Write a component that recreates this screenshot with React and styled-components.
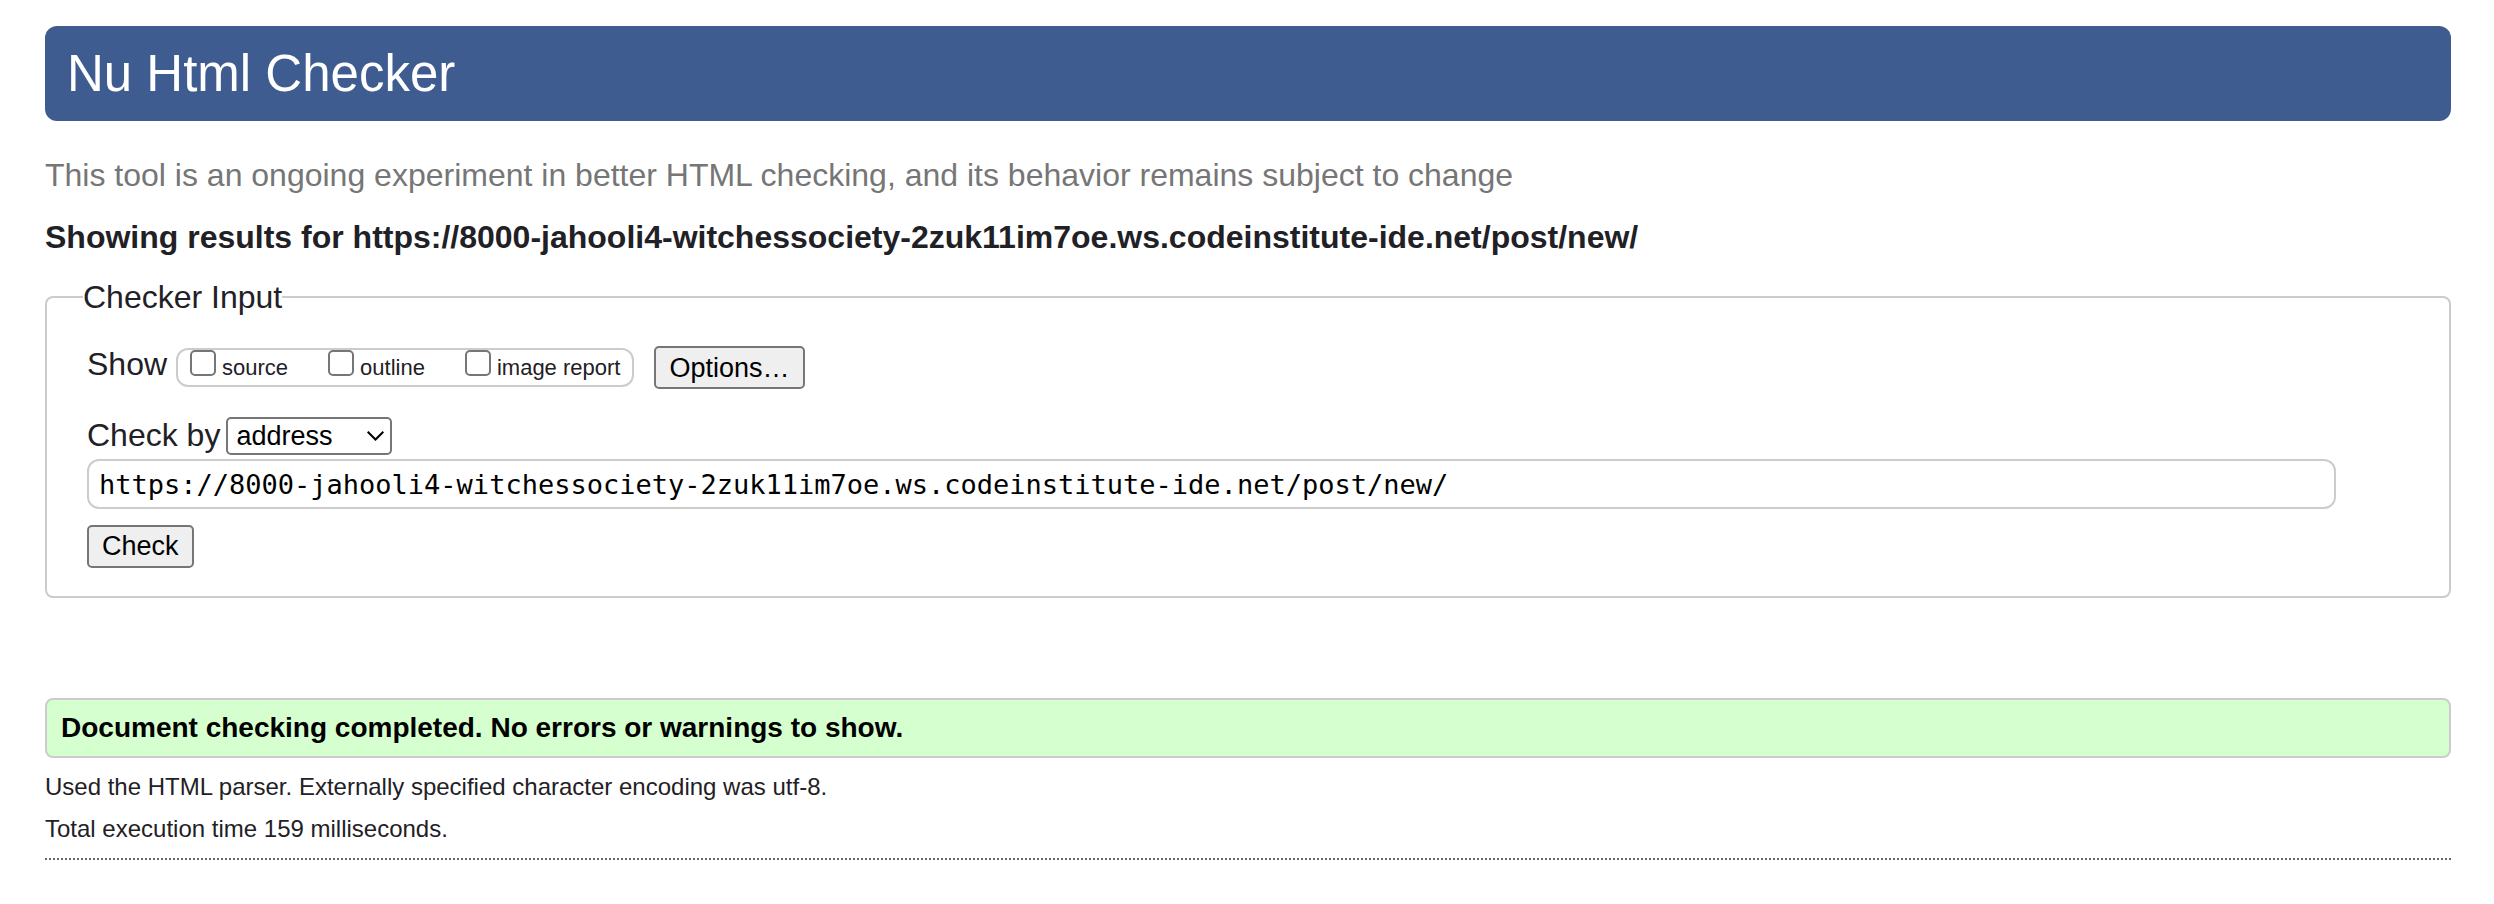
import React from 'react';
import styled, { createGlobalStyle } from 'styled-components';

const GlobalStyle = createGlobalStyle`
  *, *::before, *::after { box-sizing: border-box; }
  body {
    margin: 0;
    background: #fff;
    color: #1f2126;
    font-family: "Liberation Sans", Arial, Helvetica, sans-serif;
    font-size: 32px;
    line-height: 40px;
  }
  button, input, select { font-family: inherit; font-size: 27px; color: #000; }
`;

const Page = styled.div`
  padding: 26px 43px 44px 45px;
`;

const Banner = styled.header`
  padding: 18px 22px;
  border-radius: 12px;
  background: #3f5c91;
`;

const Title = styled.h1`
  margin: 0;
  color: #fff;
  font-size: 51px;
  font-weight: 400;
  line-height: 59px;
`;

const Tagline = styled.p`
  margin: 34px 0 0;
  color: #767676;
`;

const ResultsHeading = styled.h2`
  margin: 22px 0 0;
  font-size: 32px;
  font-weight: 700;
`;

const CheckerForm = styled.form`
  margin: 20px 0 100px;
`;

const Panel = styled.fieldset`
  margin: 0;
  padding: 29px 40px 28px;
  border: 2px solid #ccc;
  border-radius: 8px;
  min-width: 0;
`;

const Legend = styled.legend`
  margin-left: -4px;
  padding: 0;
`;

const Row = styled.div`
  display: flex;
  align-items: center;
`;

const ShowRow = styled(Row)`
  gap: 9px;
`;

const CheckByRow = styled(Row)`
  margin-top: 28px;
  gap: 6px;
`;

const RowLabel = styled.label`
  align-self: flex-start;
  line-height: 36px;
`;

const CheckGroup = styled.div`
  display: flex;
  gap: 40px;
  height: 39px;
  margin-right: 11px;
  padding: 0 12px;
  border: 2px solid #ccc;
  border-radius: 12px;
`;

const CheckLabel = styled.label`
  display: flex;
  gap: 6px;
  font-size: 22px;
  line-height: 36px;
`;

const CheckBox = styled.input`
  appearance: none;
  width: 26px;
  height: 26px;
  margin: 0;
  border: 2px solid #767676;
  border-radius: 5px;
  background: #fff;
  &:checked { background: #0075ff; }
`;

const Button = styled.button`
  height: 43px;
  padding: 0 13px;
  border: 2px solid #767676;
  border-radius: 5px;
  background: #efefef;
  line-height: 36px;
`;

const SelectWrap = styled.span`
  display: grid;
  align-items: center;
  width: 166px;
  & > * { grid-area: 1 / 1; }
`;

const Select = styled.select`
  appearance: none;
  width: 100%;
  height: 38px;
  padding: 0 8px;
  border: 2px solid #767676;
  border-radius: 5px;
  background: #fff;
`;

const Chevron = styled.svg`
  justify-self: end;
  margin-right: 8px;
  pointer-events: none;
`;

const AddressInput = styled.input`
  display: block;
  width: calc(100% - 73px);
  height: 50px;
  margin: 4px 0 15px;
  padding: 0 10px;
  border: 2px solid #ccc;
  border-radius: 12px;
  background: #fff;
  font-family: "DejaVu Sans Mono", monospace;
`;

const Success = styled.p`
  margin: 0;
  padding: 10px 14px;
  border: 2px solid #ccc;
  border-radius: 8px;
  background: #d6ffd0;
  color: #000;
  font-size: 28px;
  font-weight: 700;
  line-height: 36px;
`;

const Details = styled.footer`
  padding: 8px 0;
  border-bottom: 2px dotted #666;
`;

const Detail = styled.p`
  margin: 0;
  font-size: 24px;
  line-height: 42px;
`;

const ADDRESS = 'https://8000-jahooli4-witchessociety-2zuk11im7oe.ws.codeinstitute-ide.net/post/new/';

export default function App() {
  return (
    <>
      <GlobalStyle />
      <Page>
        <Banner>
          <Title>Nu Html Checker</Title>
        </Banner>
        <main>
          <Tagline>
            This tool is an ongoing experiment in better HTML checking, and its behavior remains subject to change
          </Tagline>
          <ResultsHeading>Showing results for {ADDRESS}</ResultsHeading>
          <CheckerForm onSubmit={(event) => event.preventDefault()}>
            <Panel>
              <Legend>Checker Input</Legend>
              <ShowRow>
                <RowLabel as="span" id="show-label">Show</RowLabel>
                <CheckGroup role="group" aria-labelledby="show-label">
                  {['source', 'outline', 'image report'].map((name) => (
                    <CheckLabel key={name}>
                      <CheckBox type="checkbox" name={name} />
                      {name}
                    </CheckLabel>
                  ))}
                </CheckGroup>
                <Button type="button">Options…</Button>
              </ShowRow>
              <CheckByRow>
                <RowLabel htmlFor="method">Check by</RowLabel>
                <SelectWrap>
                  <Select id="method" defaultValue="address">
                    <option value="address">address</option>
                    <option value="file">file upload</option>
                    <option value="text">text input</option>
                  </Select>
                  <Chevron width="17" height="10" viewBox="0 0 17 10" fill="none" stroke="#000" strokeWidth="2" aria-hidden="true">
                    <path d="M0.7 0.7 8.5 8.5 16.3 0.7" />
                  </Chevron>
                </SelectWrap>
              </CheckByRow>
              <AddressInput type="url" aria-label="Address" defaultValue={ADDRESS} spellCheck={false} />
              <Button type="submit">Check</Button>
            </Panel>
          </CheckerForm>
          <Success>Document checking completed. No errors or warnings to show.</Success>
        </main>
        <Details>
          <Detail>Used the HTML parser. Externally specified character encoding was utf-8.</Detail>
          <Detail>Total execution time 159 milliseconds.</Detail>
        </Details>
      </Page>
    </>
  );
}
